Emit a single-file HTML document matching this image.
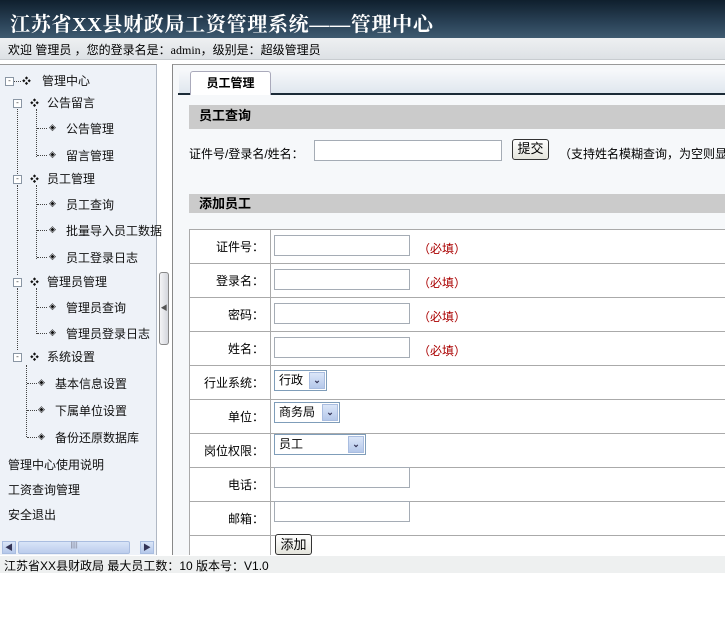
<!DOCTYPE html>
<html><head><meta charset="utf-8"><style>
*{margin:0;padding:0;box-sizing:border-box}
html,body{overflow:hidden}
body{width:725px;height:629px;background:#fff;font:12px "Liberation Sans","Noto Sans CJK SC",sans-serif;color:#000;position:relative;overflow:hidden}
.a{position:absolute;white-space:nowrap}
#hd{left:0;top:0;width:725px;height:38px;background:linear-gradient(#0f1f2d,#2a4257 60%,#3e5a70)}
#hd span{left:10px;top:8px;font:bold 20px "Liberation Serif","Noto Serif CJK SC",serif;color:#fff;letter-spacing:0.7px}
#sb{left:0;top:38px;width:725px;height:22px;background:linear-gradient(#eef0f2,#dde1e5);border-bottom:1px solid #c8ccd0}
#side{left:0;top:64px;width:157px;height:491px;background:#eef2f8;border-top:1px solid #999;border-right:1px solid #b0b8c4}
.t{font-size:12px;color:#111}
.dv{width:1px;border-left:1px dotted #444}
.dh{height:1px;border-top:1px dotted #444}
.bx{width:9px;height:9px;border:1px solid #8a96a4;background:#fff;font-size:8px;line-height:6px;text-align:center;color:#333}
.dm{font-size:9px;color:#111}
#main{left:172px;top:64px;width:553px;height:491px;background:#f6f8fa;border-left:1px solid #888;border-top:1px solid #999;overflow:hidden}
.sec{background:#cbcbcb;font-weight:bold;font-size:13px;padding-left:10px}
input.i{position:absolute;height:21px;border:1px solid #a5acb5;background:#fff}
.req{color:#a00}
#tw{position:absolute;left:189px;top:229px;width:536px;height:326px;overflow:hidden}
table{border-collapse:collapse;background:#fff;width:560px;table-layout:fixed}
td{border:1px solid #aaa;height:34px}
td.l{width:81px;text-align:right;padding-right:6px}
.sel{position:absolute;height:21px;border:1px solid #7f9db9;background:#fff;padding-left:4px;line-height:19px}
.sel b{position:absolute;right:1px;top:1px;width:16px;height:17px;background:linear-gradient(#dbe6f8,#b5c8ea);border:1px solid #a9bde0;font-size:9px;color:#335;text-align:center;line-height:15px}
.btn{position:absolute;border:1px solid #333;border-radius:3px;background:linear-gradient(#fff,#e4e4dc);text-align:center;font-size:13px}
#ft{left:0;top:556px;width:725px;height:17px;background:#eef0f0;font-size:12px;padding:1px 4px}
</style></head><body>
<div id="hd" class="a"><span class="a">江苏省XX县财政局工资管理系统——管理中心</span></div>
<div id="sb" class="a"><span class="a" style="left:8px;top:3px">欢迎 管理员 ，您的登录名是：<span style="font-family:'Liberation Serif',serif">admin</span>，级别是：超级管理员</span></div>

<div id="side" class="a">
<div class="a bx" style="left:5px;top:12px">-</div>
<div class="a dh" style="left:14px;top:16px;width:7px"></div>
<span class="a dm" style="left:22px;top:9px">❖</span>
<span class="a t" style="left:42px;top:7px">管理中心</span>

<div class="a bx" style="left:13px;top:34px">-</div><span class="a dm" style="left:30px;top:31px">❖</span><span class="a t" style="left:47px;top:29px">公告留言</span>
<div class="a dv" style="left:17px;top:44px;height:65px"></div><div class="a dv" style="left:36px;top:44px;height:48px"></div>
<div class="a dh" style="left:37px;top:63px;width:10px"></div><span class="a dm" style="left:49px;top:57px">◈</span><span class="a t" style="left:66px;top:55px">公告管理</span>
<div class="a dh" style="left:37px;top:90px;width:10px"></div><span class="a dm" style="left:49px;top:84px">◈</span><span class="a t" style="left:66px;top:82px">留言管理</span>

<div class="a bx" style="left:13px;top:110px">-</div><span class="a dm" style="left:30px;top:107px">❖</span><span class="a t" style="left:47px;top:105px">员工管理</span>
<div class="a dv" style="left:17px;top:120px;height:90px"></div><div class="a dv" style="left:36px;top:120px;height:74px"></div>
<div class="a dh" style="left:37px;top:139px;width:10px"></div><span class="a dm" style="left:49px;top:133px">◈</span><span class="a t" style="left:66px;top:131px">员工查询</span>
<div class="a dh" style="left:37px;top:165px;width:10px"></div><span class="a dm" style="left:49px;top:159px">◈</span><span class="a t" style="left:66px;top:157px">批量导入员工数据</span>
<div class="a dh" style="left:37px;top:192px;width:10px"></div><span class="a dm" style="left:49px;top:186px">◈</span><span class="a t" style="left:66px;top:184px">员工登录日志</span>

<div class="a bx" style="left:13px;top:213px">-</div><span class="a dm" style="left:30px;top:210px">❖</span><span class="a t" style="left:47px;top:208px">管理员管理</span>
<div class="a dv" style="left:17px;top:223px;height:62px"></div><div class="a dv" style="left:36px;top:223px;height:46px"></div>
<div class="a dh" style="left:37px;top:242px;width:10px"></div><span class="a dm" style="left:49px;top:236px">◈</span><span class="a t" style="left:66px;top:234px">管理员查询</span>
<div class="a dh" style="left:37px;top:268px;width:10px"></div><span class="a dm" style="left:49px;top:262px">◈</span><span class="a t" style="left:66px;top:260px">管理员登录日志</span>

<div class="a bx" style="left:13px;top:288px">-</div><span class="a dm" style="left:30px;top:285px">❖</span><span class="a t" style="left:47px;top:283px">系统设置</span>
<div class="a dv" style="left:26px;top:300px;height:72px"></div>
<div class="a dh" style="left:27px;top:318px;width:10px"></div><span class="a dm" style="left:38px;top:312px">◈</span><span class="a t" style="left:55px;top:310px">基本信息设置</span>
<div class="a dh" style="left:27px;top:345px;width:10px"></div><span class="a dm" style="left:38px;top:339px">◈</span><span class="a t" style="left:55px;top:337px">下属单位设置</span>
<div class="a dh" style="left:27px;top:372px;width:10px"></div><span class="a dm" style="left:38px;top:366px">◈</span><span class="a t" style="left:55px;top:364px">备份还原数据库</span>

<span class="a t" style="left:8px;top:391px">管理中心使用说明</span>
<span class="a t" style="left:8px;top:416px">工资查询管理</span>
<span class="a t" style="left:8px;top:441px">安全退出</span>

<div class="a" style="left:0;top:475px;width:156px;height:15px;background:#eef2f8">
<div class="a" style="left:2px;top:1px;width:14px;height:13px;background:linear-gradient(#dbe6f8,#b5c8ea);border:1px solid #a9bde0;font-size:8px;text-align:center;color:#335">◀</div>
<div class="a" style="left:18px;top:1px;width:112px;height:13px;background:linear-gradient(#d8e4f8,#bccdec);border:1px solid #a9bde0;border-radius:2px;font-size:7px;text-align:center;color:#778">||||</div>
<div class="a" style="left:140px;top:1px;width:14px;height:13px;background:linear-gradient(#dbe6f8,#b5c8ea);border:1px solid #a9bde0;font-size:8px;text-align:center;color:#335">▶</div>
</div>
</div>
<div class="a" style="left:159px;top:272px;width:10px;height:73px;border:1px solid #888;border-radius:3px;background:linear-gradient(90deg,#f4f4f6,#d4d6dc);font-size:7px;line-height:71px;text-align:center;color:#555">◀</div>

<div id="main" class="a">
<div class="a" style="left:6px;top:4px;width:547px;height:25px;background:linear-gradient(#f8f9fb,#dfe6ee)"></div>
<div class="a" style="left:5px;top:28px;width:548px;height:2px;background:#1b2a36"></div>
<div class="a" style="left:17px;top:6px;width:81px;height:24px;background:#fff;border:1px solid #aab;border-bottom:none;border-radius:3px 3px 0 0;font-weight:bold;text-align:center;line-height:23px">员工管理</div>
<div class="a sec" style="left:16px;top:40px;width:537px;height:24px;line-height:22px">员工查询</div>
<span class="a" style="left:16px;top:80px">证件号/登录名/姓名：</span>
<input class="i" style="left:141px;top:75px;width:188px">
<div class="btn" style="left:339px;top:74px;width:37px;height:21px;line-height:18px">提交</div>
<span class="a" style="left:386px;top:80px">（支持姓名模糊查询，为空则显示全部）</span>
<div class="a sec" style="left:16px;top:129px;width:537px;height:19px;line-height:19px">添加员工</div>
</div>

<div id="tw"><table>
<tr><td class="l">证件号：</td><td></td></tr>
<tr><td class="l">登录名：</td><td></td></tr>
<tr><td class="l">密码：</td><td></td></tr>
<tr><td class="l">姓名：</td><td></td></tr>
<tr><td class="l">行业系统：</td><td></td></tr>
<tr><td class="l" style="height:32px">单位：</td><td></td></tr>
<tr><td class="l" style="height:32px">岗位权限：</td><td></td></tr>
<tr><td class="l">电话：</td><td></td></tr>
<tr><td class="l">邮箱：</td><td></td></tr>
<tr><td class="l" style="height:30px"></td><td></td></tr>
</table></div>
<input class="i" style="left:274px;top:235px;width:136px">
<span class="a req" style="left:418px;top:240px">（必填）</span>
<input class="i" style="left:274px;top:269px;width:136px">
<span class="a req" style="left:418px;top:274px">（必填）</span>
<input class="i" style="left:274px;top:303px;width:136px">
<span class="a req" style="left:418px;top:308px">（必填）</span>
<input class="i" style="left:274px;top:337px;width:136px">
<span class="a req" style="left:418px;top:342px">（必填）</span>
<div class="sel" style="left:274px;top:370px;width:53px">行政<b>⌄</b></div>
<div class="sel" style="left:274px;top:402px;width:66px">商务局<b>⌄</b></div>
<div class="sel" style="left:274px;top:434px;width:92px">员工<b>⌄</b></div>
<input class="i" style="left:274px;top:467px;width:136px">
<input class="i" style="left:274px;top:501px;width:136px">
<div class="btn" style="left:275px;top:534px;width:37px;height:21px;line-height:19px">添加</div>

<div id="ft" class="a">江苏省XX县财政局 最大员工数：10 版本号：V1.0</div>
</body></html>
